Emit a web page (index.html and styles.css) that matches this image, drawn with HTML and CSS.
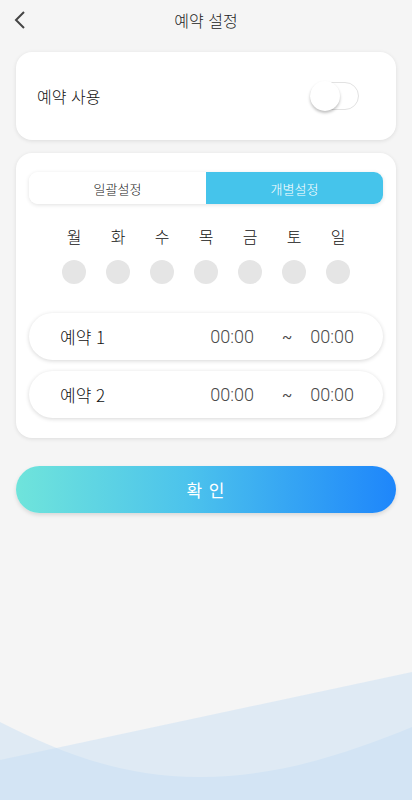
FILE: index.html
```html
<!DOCTYPE html>
<html lang="ko">
<head>
<meta charset="utf-8">
<link rel="stylesheet" href="styles.css">
</head>
<body>
<div class="page">
  <header class="header">
    <svg class="back" width="14" height="20" viewBox="0 0 14 20"><polyline points="11,2 3,10 11,18" fill="none" stroke="#444" stroke-width="2"/></svg>
    <h1 class="title">예약 설정</h1>
  </header>

  <section class="card card-use">
    <span class="use-label">예약 사용</span>
    <div class="toggle"><div class="knob"></div></div>
  </section>

  <section class="card card-main">
    <div class="segment">
      <div class="seg seg-off">일괄설정</div>
      <div class="seg seg-on">개별설정</div>
    </div>
    <div class="days">
      <span class="day">월</span><span class="day">화</span><span class="day">수</span><span class="day">목</span><span class="day">금</span><span class="day">토</span><span class="day">일</span>
      <span class="dot"></span><span class="dot"></span><span class="dot"></span><span class="dot"></span><span class="dot"></span><span class="dot"></span><span class="dot"></span>
    </div>
    <div class="rows">
      <div class="row"><span class="row-label">예약 1</span><span class="time">00:00</span><span class="tilde">~</span><span class="time">00:00</span></div>
      <div class="row"><span class="row-label">예약 2</span><span class="time">00:00</span><span class="tilde">~</span><span class="time">00:00</span></div>
    </div>
  </section>

  <button class="confirm">확 인</button>
</div>
<svg class="wave" width="412" height="140" viewBox="0 0 412 140" preserveAspectRatio="none">
  <path d="M0 62 C 60 92, 120 117, 200 117 C 280 117, 350 92, 412 67 L412 140 L0 140 Z" fill="#c6ddf4" fill-opacity="0.45"/>
  <path d="M0 100 L412 12 L412 140 L0 140 Z" fill="#c6ddf4" fill-opacity="0.45"/>
</svg>
</body>
</html>
```

FILE: styles.css
```css
* { box-sizing: border-box; }
html, body { margin: 0; padding: 0; }
body {
  background: #f5f5f5;
  font-family: Roboto, "Noto Sans CJK KR", sans-serif;
  color: #222;
  width: 412px;
  height: 800px;
  position: relative;
  overflow: hidden;
}
.page {
  position: relative;
  z-index: 1;
  padding: 0 16px;
}
.header {
  height: 40px;
  position: relative;
  display: flex;
  align-items: center;
  justify-content: center;
}
.back {
  position: absolute;
  left: -3px;
  top: 10px;
}
.title {
  margin: 0;
  font-size: 16px;
  font-weight: 300;
  color: #222;
  font-family: "Noto Sans CJK KR", sans-serif;
}
.card {
  background: #fff;
  border-radius: 16px;
  box-shadow: 0 1px 4px rgba(0,0,0,0.10);
}
.card-use {
  margin-top: 12px;
  height: 88px;
  display: flex;
  align-items: center;
  justify-content: space-between;
  padding: 0 37px 0 21px;
}
.use-label {
  font-size: 16px;
  font-weight: 300;
  font-family: "Noto Sans CJK KR", sans-serif;
  color: #111;
}
.toggle {
  width: 49px;
  height: 28px;
  border-radius: 14px;
  border: 1px solid #e2e2e2;
  background: #fff;
  position: relative;
}
.knob {
  position: absolute;
  left: -1px;
  top: -2px;
  width: 30px;
  height: 30px;
  border-radius: 50%;
  background: #fff;
  box-shadow: 0 2px 3px rgba(0,0,0,0.25);
}
.card-main {
  margin-top: 13px;
  padding: 19px 13px 20px;
}
.segment {
  display: flex;
  height: 32px;
  border-radius: 9px;
  overflow: hidden;
  box-shadow: 0 1px 4px rgba(0,0,0,0.12);
}
.seg {
  flex: 1;
  display: flex;
  align-items: center;
  justify-content: center;
  font-size: 13px;
  font-weight: 300;
  font-family: "Noto Sans CJK KR", sans-serif;
}
.seg-off { background: #fff; color: #222; }
.seg-on { background: #45c4eb; color: #fff; }
.days {
  display: grid;
  grid-template-columns: repeat(7, 44px);
  justify-content: center;
  justify-items: center;
  margin-top: 20px;
  row-gap: 12px;
}
.day {
  font-size: 16px;
  font-weight: 300;
  line-height: 24px;
  color: #111;
  font-family: "Noto Sans CJK KR", sans-serif;
}
.dot {
  width: 24px;
  height: 24px;
  border-radius: 50%;
  background: #e5e5e5;
}
.rows {
  margin-top: 29px;
  display: flex;
  flex-direction: column;
  gap: 11px;
}
.row {
  height: 47px;
  border-radius: 24px;
  background: #fff;
  box-shadow: 0 1px 4px rgba(0,0,0,0.16);
  display: flex;
  align-items: center;
  padding: 0 29px 0 31px;
  font-size: 18px;
}
.row-label {
  flex: 1;
  color: #111;
  font-family: "Noto Sans CJK KR", sans-serif;
  font-weight: 300;
  font-size: 17px;
}
.time {
  color: #4a4a4a;
  font-weight: 300;
}
.tilde {
  color: #4a4a4a;
  margin: 0 18px 0 28px;
  font-size: 15px;
}
.confirm {
  display: block;
  width: 100%;
  margin-top: 28px;
  height: 47px;
  border: none;
  border-radius: 24px;
  background: linear-gradient(90deg, #6fe4db 0%, #4cc3ec 45%, #1e86fb 100%);
  box-shadow: 0 2px 4px rgba(0,0,0,0.12);
  color: #fff;
  font-size: 17px;
  font-weight: 400;
  font-family: "Noto Sans CJK KR", sans-serif;
  letter-spacing: 1px;
}
.wave {
  position: absolute;
  left: 0;
  bottom: 0;
  z-index: 0;
  display: block;
}
```
